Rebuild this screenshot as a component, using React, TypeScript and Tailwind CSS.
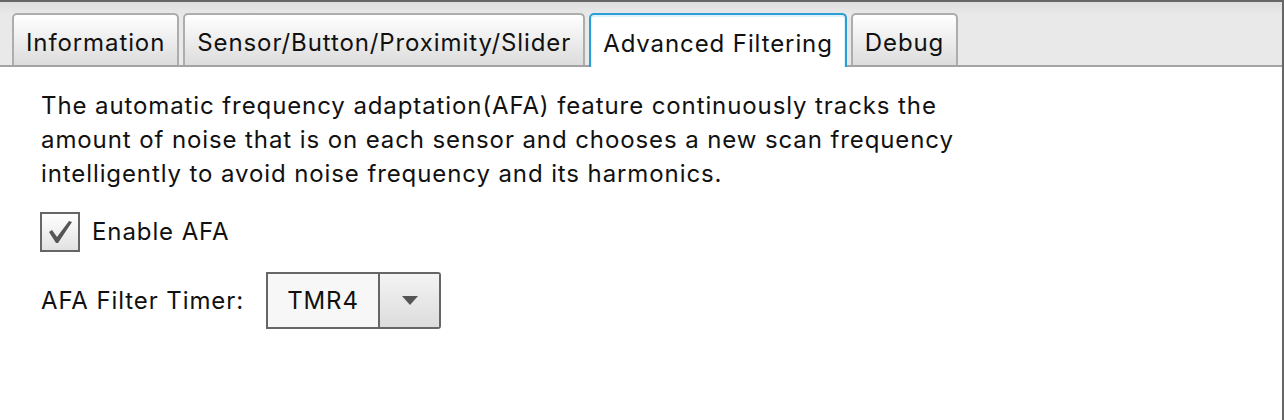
import React, { useState } from 'react';

const tabs = ['Information', 'Sensor/Button/Proximity/Slider', 'Advanced Filtering', 'Debug'];

const App: React.FC = () => {
  const [active, setActive] = useState('Advanced Filtering');
  const [afa, setAfa] = useState(true);

  return (
    <div
      className="w-[1284px] h-[420px] bg-white border-t-2 border-r-2 border-[#666] flex flex-col text-[#111] tracking-[0.9px]"
      style={{ fontFamily: 'Inter, "Open Sans", sans-serif' }}
    >
      {/* tab strip */}
      <div className="h-[65px] shrink-0 bg-gradient-to-b from-[#dedede] to-[#e9e9e9] to-[20%] border-b-2 border-[#a3a3a3] flex items-end pl-[12px] gap-[4px]">
        {tabs.map((t) => {
          const sel = t === active;
          return (
            <button
              key={t}
              onClick={() => setActive(t)}
              className={
                sel
                  ? 'h-[54px] -mb-[2px] px-[12px] pt-[5px] rounded-t-[5px] border-2 border-b-0 border-[#2a9fd6] bg-white shadow-[inset_0_1px_0_1px_#dff1fa] text-[24px] leading-none'
                  : 'h-[52px] px-[12px] pt-[5px] rounded-t-[5px] border-2 border-b-0 border-[#adadad] bg-gradient-to-b from-white to-[#dcdcdc] text-[24px] leading-none'
              }
            >
              {t}
            </button>
          );
        })}
      </div>

      {/* content */}
      <div className="flex flex-col px-[41px] pt-[22px]">
        <p className="text-[24px] leading-[34px]">
          <span className="block">The automatic frequency adaptation(AFA) feature continuously tracks the</span>
          <span className="block">amount of noise that is on each sensor and chooses a new scan frequency</span>
          <span className="block">intelligently to avoid noise frequency and its harmonics.</span>
        </p>

        <label className="flex items-center gap-[12px] mt-[21px] cursor-pointer select-none">
          <span
            onClick={() => setAfa(!afa)}
            className="w-[40px] h-[40px] -ml-[1px] border-2 border-[#666] bg-gradient-to-b from-white to-[#e2e2e2] flex items-center justify-center"
          >
            {afa && (
              <svg width="28" height="28" viewBox="0 0 28 28">
                <path d="M3 14 L6 12 L11 19 L23 3 L26 4 L12 25 L10 25 Z" fill="#555" />
              </svg>
            )}
          </span>
          <span className="text-[24px]">Enable AFA</span>
        </label>

        <div className="flex items-center mt-[20px]">
          <span className="text-[24px] w-[225px]">AFA Filter Timer:</span>
          <div className="flex h-[57px] w-[175px] border-2 border-[#666] rounded-r-[3px]">
            <div className="w-[112px] bg-[#f7f7f7] flex items-center justify-center text-[24px] border-r-2 border-[#666]">
              TMR4
            </div>
            <div className="flex-1 bg-gradient-to-b from-[#f4f4f4] to-[#dcdcdc] flex items-center justify-center">
              <svg width="16" height="10" viewBox="0 0 16 10">
                <path d="M0 0 H16 L8 9 Z" fill="#555" />
              </svg>
            </div>
          </div>
        </div>
      </div>
    </div>
  );
};

export default App;
